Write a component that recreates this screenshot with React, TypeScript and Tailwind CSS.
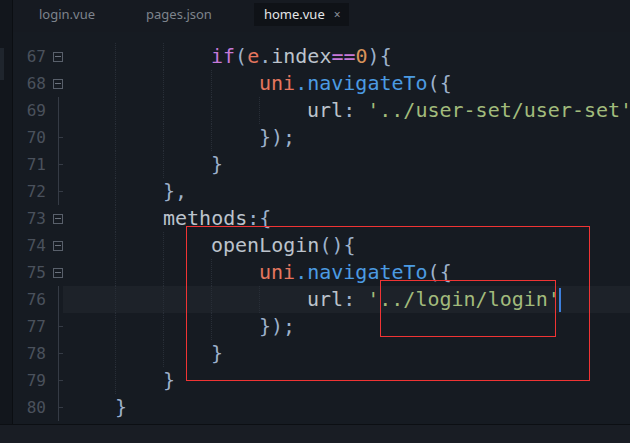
import React from "react";

type Tok = [string, string];

const C = {
  def: "text-[#bcc3cc]",
  p: "text-[#9db1cb]",
  kw: "text-[#c679d8]",
  v: "text-[#e5765f]",
  fn: "text-[#4c9be2]",
  str: "text-[#a2bb7c]",
  num: "text-[#d8935a]",
};

type Row = {
  n: number;
  indent: number;
  toks: Tok[];
  fold: "box" | "line" | "tick" | "none";
  active?: boolean;
};

const rows: Row[] = [
  { n: 67, indent: 3, fold: "box", toks: [["if", C.kw], ["(", C.p], ["e", C.v], [".", C.p], ["index", C.def], ["==", C.kw], ["0", C.num], ["){", C.p]] },
  { n: 68, indent: 4, fold: "box", toks: [["uni", C.v], [".", C.fn], ["navigateTo", C.fn], ["({", C.p]] },
  { n: 69, indent: 5, fold: "line", toks: [["url", C.def], [": ", C.p], ["'../user-set/user-set'", C.str]] },
  { n: 70, indent: 4, fold: "tick", toks: [["});", C.p]] },
  { n: 71, indent: 3, fold: "tick", toks: [["}", C.p]] },
  { n: 72, indent: 2, fold: "tick", toks: [["},", C.p]] },
  { n: 73, indent: 2, fold: "box", toks: [["methods", C.def], [":{", C.p]] },
  { n: 74, indent: 3, fold: "box", toks: [["openLogin", C.def], ["(){", C.p]] },
  { n: 75, indent: 4, fold: "box", toks: [["uni", C.v], [".", C.fn], ["navigateTo", C.fn], ["({", C.p]] },
  { n: 76, indent: 5, fold: "line", active: true, toks: [["url", C.def], [": ", C.p], ["'../login/login'", C.str]] },
  { n: 77, indent: 4, fold: "tick", toks: [["});", C.p]] },
  { n: 78, indent: 3, fold: "tick", toks: [["}", C.p]] },
  { n: 79, indent: 2, fold: "tick", toks: [["}", C.p]] },
  { n: 80, indent: 1, fold: "tick", toks: [["}", C.p]] },
];

const Fold = ({ kind }: { kind: Row["fold"] }) => {
  if (kind === "box")
    return (
      <div className="w-[17px] shrink-0 h-full flex items-center">
        <div className="ml-[7px] w-[10px] h-[10px] border border-[#59606b] flex items-center justify-center">
          <div className="w-[6px] h-px bg-[#6b727d]" />
        </div>
      </div>
    );
  if (kind === "none") return <div className="w-[17px] shrink-0 h-full" />;
  return (
    <div className="w-[17px] shrink-0 h-full relative">
      <div className="absolute left-[12px] top-0 bottom-0 w-px bg-[#353b45]" />
      {kind === "tick" && <div className="absolute left-[12px] top-[13px] w-[5px] h-px bg-[#353b45]" />}
    </div>
  );
};

const CodeRow = ({ row }: { row: Row }) => (
  <div className="flex h-[27px]">
    <div className="w-[33px] shrink-0 text-right text-[16px] leading-[27px] text-[#4a515c]">{row.n}</div>
    <Fold kind={row.fold} />
    <div className={`flex-1 min-w-0 overflow-hidden flex pl-[4px] ${row.active ? "bg-[#1d2229]" : ""}`}>
      {Array.from({ length: row.indent }).map((_, i) => (
        <div
          key={i}
          className={`w-[48px] h-full shrink-0 ${i > 0 ? "border-l border-dotted border-[#282e37]" : ""}`}
        />
      ))}
      <div className="whitespace-pre text-[20px] leading-[27px] flex items-center shrink-0">
        {row.toks.map(([t, c], i) => (
          <span key={i} className={c}>
            {t}
          </span>
        ))}
        {row.active && <span className="inline-block w-[2px] h-[24px] bg-[#3d7fdc] -ml-[1px]" />}
      </div>
    </div>
  </div>
);

export default function App() {
  return (
    <div
      className="relative w-[630px] h-[443px] overflow-hidden bg-[#161b22] flex flex-col"
      style={{ fontFamily: "'DejaVu Sans Mono', monospace" }}
    >
      <div className="flex flex-1 min-h-0">
        <div className="w-[13px] shrink-0 bg-[#12161c] border-r border-[#0b0e12] pt-[48px]">
          <div className="w-[4px] h-[32px] bg-[#1f252d]" />
        </div>
        <div className="flex-1 flex flex-col min-w-0">
          <div
            className="h-[32px] shrink-0 flex items-start text-[13px] bg-[#161a21]"
            style={{ fontFamily: "'Noto Sans', sans-serif" }}
          >
            <div className="pl-[26px] h-[23px] mt-[3px] flex items-center text-[#7d838c]">login.vue</div>
            <div className="ml-[51px] h-[23px] mt-[3px] flex items-center text-[#7d838c]">pages.json</div>
            <div className="ml-[42px] mt-[3px] h-[23px] w-[95px] bg-[#0f1217] flex items-center pl-[10px] text-[#e4e6e9]">
              home.vue
              <span className="ml-[9px] text-[12px] text-[#8b9099]">×</span>
            </div>
          </div>
          <div className="flex-1 pt-[11px] overflow-hidden">
            {rows.map((r) => (
              <CodeRow key={r.n} row={r} />
            ))}
          </div>
        </div>
      </div>
      <div className="h-[19px] shrink-0 bg-[#191d24] border-t border-[#0c0f13]" />

      <div className="absolute left-[186px] top-[226px] w-[404px] h-[155px] border border-[#f03434]" />
      <div className="absolute left-[380px] top-[280px] w-[176px] h-[57px] border border-[#f03434]" />
    </div>
  );
}
